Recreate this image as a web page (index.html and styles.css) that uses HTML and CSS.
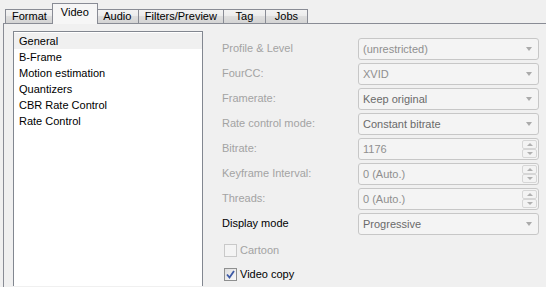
FILE: index.html
```html
<!DOCTYPE html>
<html lang="en">
<head>
    <meta charset="UTF-8">
    <title>Video settings</title>
    <link rel="stylesheet" href="styles.css">
</head>
<body>
    <!-- Tab strip -->
    <div class="tabs">
        <div class="tab">Format</div>
        <div class="tab selected">Video</div>
        <div class="tab">Audio</div>
        <div class="tab">Filters/Preview</div>
        <div class="tab">Tag</div>
        <div class="tab">Jobs</div>
    </div>

    <div class="pane">
        <!-- Section list -->
        <ul class="section-list">
            <li class="active">General</li>
            <li>B-Frame</li>
            <li>Motion estimation</li>
            <li>Quantizers</li>
            <li>CBR Rate Control</li>
            <li>Rate Control</li>
        </ul>

        <!-- General settings -->
        <div class="settings">
            <div class="row">
                <span class="label disabled">Profile &amp; Level</span>
                <div class="combo disabled"><span>(unrestricted)</span><i class="arrow"></i></div>
            </div>
            <div class="row">
                <span class="label disabled">FourCC:</span>
                <div class="combo disabled"><span>XVID</span><i class="arrow"></i></div>
            </div>
            <div class="row">
                <span class="label disabled">Framerate:</span>
                <div class="combo"><span>Keep original</span><i class="arrow"></i></div>
            </div>
            <div class="row">
                <span class="label disabled">Rate control mode:</span>
                <div class="combo"><span>Constant bitrate</span><i class="arrow"></i></div>
            </div>
            <div class="row">
                <span class="label disabled">Bitrate:</span>
                <div class="spin"><span>1176</span><div class="spin-btns"><b class="up"></b><b class="down"></b></div></div>
            </div>
            <div class="row">
                <span class="label disabled">Keyframe Interval:</span>
                <div class="spin"><span>0 (Auto.)</span><div class="spin-btns"><b class="up"></b><b class="down"></b></div></div>
            </div>
            <div class="row">
                <span class="label disabled">Threads:</span>
                <div class="spin"><span>0 (Auto.)</span><div class="spin-btns"><b class="up"></b><b class="down"></b></div></div>
            </div>
            <div class="row">
                <span class="label">Display mode</span>
                <div class="combo"><span>Progressive</span><i class="arrow"></i></div>
            </div>

            <div class="check-row first disabled">
                <span class="box"></span>Cartoon
            </div>
            <div class="check-row">
                <span class="box checked">
                    <svg width="9" height="9" viewBox="0 0 9 9"><path d="M1 4.5 L3.5 7.5 L8 1" fill="none" stroke="#3d5aa6" stroke-width="1.8"/></svg>
                </span>Video copy
            </div>
        </div>
    </div>
</body>
</html>
```

FILE: styles.css
```css
body, html {
    margin: 0;
    padding: 0;
    font-family: "Liberation Sans", Arial, sans-serif;
    font-size: 11px;
    background-color: #f0f0f0;
    color: #000;
    overflow: hidden;
    height: 287px;
}

/* Tab strip */
.tabs {
    display: flex;
    align-items: flex-end;
    height: 24px;
    padding-left: 5px;
    position: relative;
    z-index: 2;
}

.tab {
    box-sizing: border-box;
    min-width: 43px;
    height: 14px;
    line-height: 13px;
    margin-bottom: 1px;
    margin-right: -1px;
    padding: 0 6px;
    text-align: center;
    border: 1px solid #898c95;
    border-bottom: none;
    background: linear-gradient(#f3f3f3, #ebebeb 50%, #dedede 50%, #d4d4d4);
    color: #000;
}

.tab.selected {
    min-width: 45px;
    height: 21px;
    line-height: 17px;
    margin-bottom: 0;
    margin-left: -1px;
    margin-right: -2px;
    padding: 0 8px;
    background: #f6f6f6;
    position: relative;
    z-index: 3;
}

.pane {
    margin-top: -1px;
    margin-left: 3px;
    border: 1px solid #898c95;
    border-right: none;
    border-bottom: none;
    height: 256px;
    padding: 7px 0 0 9px;
    display: flex;
    background: #f0f0f0;
}

/* Section list */
.section-list {
    list-style: none;
    margin: 0;
    padding: 1px 0 0 0;
    width: 188px;
    height: 253px;
    border: 1px solid #828790;
    border-bottom: none;
    background: #fff;
}

.section-list li {
    height: 16px;
    line-height: 16px;
    padding-left: 5px;
}

.section-list li.active {
    background: #f0f0f0;
}

/* Settings column */
.settings {
    margin-left: 19px;
    padding-top: 7px;
    display: flex;
    flex-direction: column;
}

.row {
    display: flex;
    align-items: center;
    height: 22px;
    margin-bottom: 3px;
}

.label {
    width: 136px;
    margin-top: -3px;
}

.label.disabled {
    color: #a3a3a3;
}

.combo, .spin {
    width: 175px;
    height: 20px;
    border: 1px solid #c7c7c7;
    border-radius: 3px;
    background: #f4f4f4;
    display: flex;
    align-items: center;
    justify-content: space-between;
    padding-left: 4px;
    color: #6a6a6a;
}

.combo.disabled {
    color: #8f8f8f;
}

.arrow {
    width: 0;
    height: 0;
    border-left: 3px solid transparent;
    border-right: 3px solid transparent;
    border-top: 4px solid #aaaaaa;
    margin-right: 6px;
}

.spin {
    color: #8f8f8f;
}

.spin-btns {
    display: flex;
    flex-direction: column;
    width: 15px;
    height: 18px;
    margin-right: 1px;
}

.spin-btns b {
    flex: 1;
    border: 1px solid #d6d6d6;
    border-radius: 2px;
    background: #f3f3f3;
    display: flex;
    justify-content: center;
    align-items: center;
}

.spin-btns b::after {
    content: "";
    width: 0;
    height: 0;
    border-left: 3px solid transparent;
    border-right: 3px solid transparent;
}

.spin-btns .up::after {
    border-bottom: 3px solid #b0b0b0;
}

.spin-btns .down::after {
    border-top: 3px solid #b0b0b0;
}

/* Checkboxes */
.check-row {
    display: flex;
    align-items: center;
    height: 16px;
    margin-top: 8px;
    padding-left: 2px;
}

.check-row.first {
    margin-top: 4px;
}

.check-row.disabled {
    color: #a3a3a3;
}

.box {
    width: 11px;
    height: 11px;
    border: 1px solid #8e8f8f;
    background: linear-gradient(135deg, #dcdcdc, #fbfbfb);
    margin-right: 3px;
    display: flex;
    align-items: center;
    justify-content: center;
}

.check-row.disabled .box {
    border-color: #c9c9c9;
    background: #f4f4f4;
}
```
